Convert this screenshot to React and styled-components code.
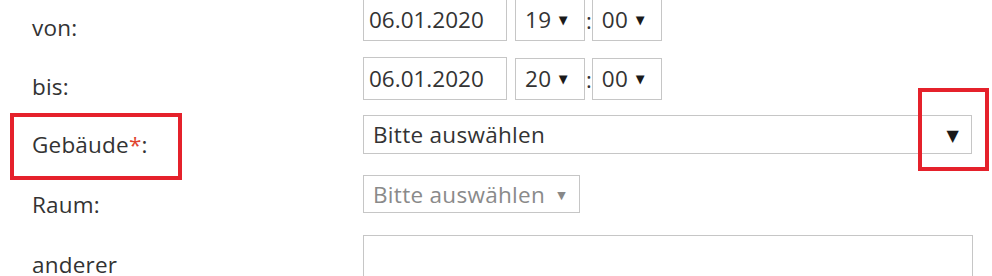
import React from "react";
import styled, { createGlobalStyle } from "styled-components";

const GlobalStyle = createGlobalStyle`
html, body {
  margin: 0;
  padding: 0;
  background: #fff;
  overflow: hidden;
}
body {
  font-family: "Open Sans", "DejaVu Sans", sans-serif;
  color: #333;
}
`;

const Form = styled.div`
display: flex;
flex-direction: column;
margin-top: -2px;
width: 992px;
`;

const Row = styled.div`
position: relative;
display: flex;
align-items: flex-start;
height: ${props => props.h}px;
`;

const Label = styled.div`
width: 331px;
padding-left: 32px;
padding-top: 15px;
font-size: 22.5px;
letter-spacing: 0.2px;
line-height: 30px;
color: #333;
flex-shrink: 0;
`;

const Star = styled.span`
color: #e0442f;
`;

const Field = styled.div`
display: flex;
align-items: center;
gap: 8px;
`;

const DateInput = styled.div`
box-sizing: border-box;
width: 144px;
height: 43px;
border: 1px solid #c6c6c6;
padding-left: 5px;
display: flex;
align-items: center;
font-size: 22.5px;
color: #333;
`;

const Select = styled.div`
box-sizing: border-box;
width: ${props => props.w}px;
height: ${props => props.h}px;
border: 1px solid #c6c6c6;
padding: 0 ${props => props.pr}px 0 ${props => props.pl}px;
display: flex;
align-items: center;
justify-content: space-between;
font-size: 22.5px;
letter-spacing: 0.3px;
color: ${props => (props.muted ? "#8a8a8a" : "#333")};
background: #fff;
`;

const Arrow = styled.span`
font-size: ${props => props.size}px;
color: ${props => (props.muted ? "#888" : "#1a1a1a")};
line-height: 1;
`;

const Colon = styled.span`
font-size: 22px;
color: #333;
margin: 0 -8px 0 -7px;
`;

const TextArea = styled.div`
box-sizing: border-box;
width: 610px;
height: 80px;
border: 1px solid #c6c6c6;
border-bottom: none;
`;

const Highlight = styled.div`
position: absolute;
box-sizing: border-box;
left: ${props => props.x}px;
top: ${props => props.y}px;
width: ${props => props.w}px;
height: ${props => props.h}px;
border: 4px solid #e5212b;
pointer-events: none;
`;

const TimeSelect = ({ value }) => (
  <Select w={70} h={42} pl={9} pr={16}>
    {value}
    <Arrow size={11.5}>▼</Arrow>
  </Select>
);

const DateRow = ({ label, date, hour, minute, h }) => (
  <Row h={h}>
    <Label>{label}</Label>
    <Field>
      <DateInput>{date}</DateInput>
      <TimeSelect value={hour} />
      <Colon>:</Colon>
      <TimeSelect value={minute} />
    </Field>
  </Row>
);

export default function App() {
  return (
    <>
      <GlobalStyle />
      <Form>
        <DateRow label="von:" date="06.01.2020" hour="19" minute="00" h={59} />
        <DateRow label="bis:" date="06.01.2020" hour="20" minute="00" h={58} />
        <Row h={60}>
          <Label>
            Gebäude<Star>*</Star>:
          </Label>
          <Select w={609} h={39} pl={9} pr={12}>
            Bitte auswählen
            <Arrow size={16}>▼</Arrow>
          </Select>
          <Highlight x={10} y={-2} w={172} h={67} />
          <Highlight x={918} y={-27} w={71} h={83} />
        </Row>
        <Row h={60}>
          <Label>Raum:</Label>
          <Select w={217} h={38} pl={9} pr={13} muted>
            Bitte auswählen
            <Arrow size={11} muted>▼</Arrow>
          </Select>
        </Row>
        <Row h={60}>
          <Label>anderer</Label>
          <TextArea />
        </Row>
      </Form>
    </>
  );
}
